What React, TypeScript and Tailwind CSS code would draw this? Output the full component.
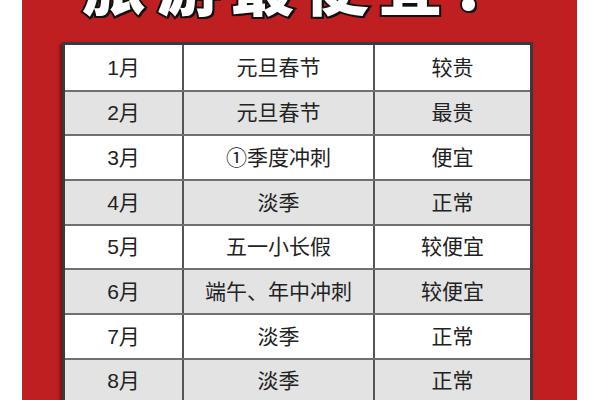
const rows = [
  { month: '1月', event: '元旦春节', price: '较贵' },
  { month: '2月', event: '元旦春节', price: '最贵' },
  { month: '3月', event: '①季度冲刺', price: '便宜' },
  { month: '4月', event: '淡季', price: '正常' },
  { month: '5月', event: '五一小长假', price: '较便宜' },
  { month: '6月', event: '端午、年中冲刺', price: '较便宜' },
  { month: '7月', event: '淡季', price: '正常' },
  { month: '8月', event: '淡季', price: '正常' },
  { month: '9月', event: '中秋国庆', price: '较贵' },
];

export default function App() {
  return (
    <div
      className="w-[600px] h-[400px] overflow-hidden bg-white flex pl-[22px] pr-[23px]"
      style={{ fontFamily: '"Liberation Sans", "Noto Sans CJK SC", sans-serif' }}
    >
      <div className="flex-1 bg-[#c01f22] flex flex-col">
        {/* Title, cut off at the top */}
        <div className="h-[42px] shrink-0 overflow-hidden flex justify-center">
          <div className="mt-[-44px] ml-[10px] text-[64px] leading-none font-black text-white tracking-[10px] [-webkit-text-stroke:4px_#111] [paint-order:stroke_fill] [text-shadow:2px_2px_0_#111]">
            旅游最便宜！
          </div>
        </div>

        {/* Table */}
        <div className="ml-[40px] w-[471px] border-[3px] border-[#3a3a3a] shadow-[-2px_2px_3px_rgba(0,0,0,0.45)] bg-white">
          {rows.map((r, i) => (
            <div
              key={r.month}
              className={`flex h-[44.7px] text-[21px] text-[#222] ${i > 0 ? 'border-t-2 border-[#707070]' : ''} ${i % 2 === 1 ? 'bg-[#e3e3e3]' : 'bg-white'}`}
            >
              <div className="w-[119px] flex items-center justify-center border-r-2 border-[#555]">
                {r.month}
              </div>
              <div className="w-[191px] flex items-center justify-center border-r-2 border-[#555]">
                {r.event}
              </div>
              <div className="flex-1 flex items-center justify-center">{r.price}</div>
            </div>
          ))}
        </div>
      </div>
    </div>
  );
}
